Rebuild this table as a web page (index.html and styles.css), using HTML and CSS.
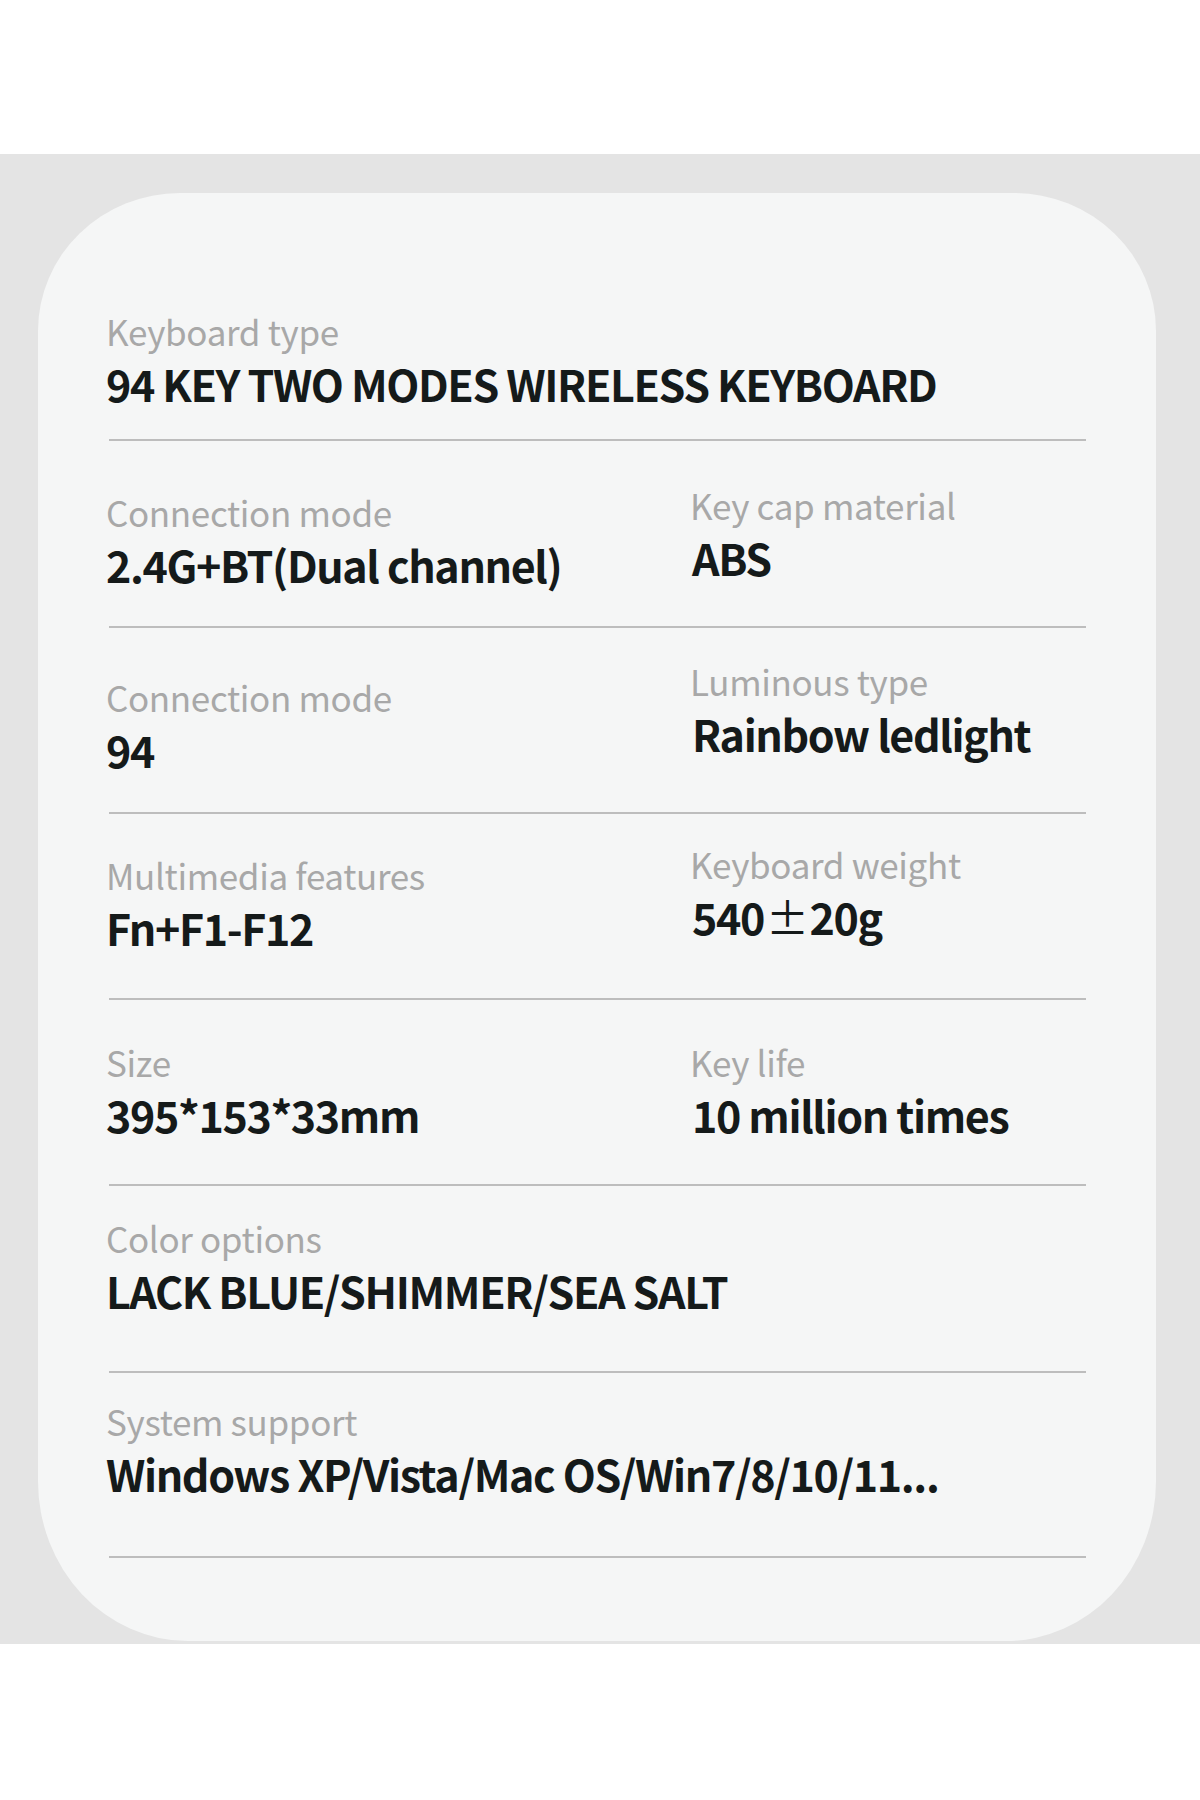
FILE: index.html
```html
<!DOCTYPE html>
<html lang="en">
<head>
<meta charset="utf-8">
<title>Keyboard specifications</title>
<link rel="stylesheet" href="styles.css">
</head>
<body>
<div class="top-space"></div>
<section class="band">
  <div class="card">
    <div class="row">
      <div class="cell">
        <div class="label">Keyboard type</div>
        <div class="value">94 KEY TWO MODES WIRELESS KEYBOARD</div>
      </div>
    </div>
    <div class="row two">
      <div class="cell">
        <div class="label">Connection mode</div>
        <div class="value">2.4G+BT(Dual channel)</div>
      </div>
      <div class="cell right">
        <div class="label">Key cap material</div>
        <div class="value">ABS</div>
      </div>
    </div>
    <div class="row two">
      <div class="cell">
        <div class="label">Connection mode</div>
        <div class="value">94</div>
      </div>
      <div class="cell right">
        <div class="label">Luminous type</div>
        <div class="value">Rainbow ledlight</div>
      </div>
    </div>
    <div class="row two">
      <div class="cell">
        <div class="label">Multimedia features</div>
        <div class="value">Fn+F1-F12</div>
      </div>
      <div class="cell right">
        <div class="label">Keyboard weight</div>
        <div class="value">540<span class="pm">±</span>20g</div>
      </div>
    </div>
    <div class="row two">
      <div class="cell">
        <div class="label">Size</div>
        <div class="value">395*153*33mm</div>
      </div>
      <div class="cell right">
        <div class="label">Key life</div>
        <div class="value">10 million times</div>
      </div>
    </div>
    <div class="row">
      <div class="cell">
        <div class="label">Color options</div>
        <div class="value">LACK BLUE/SHIMMER/SEA SALT</div>
      </div>
    </div>
    <div class="row">
      <div class="cell">
        <div class="label">System support</div>
        <div class="value">Windows XP/Vista/Mac OS/Win7/8/10/11...</div>
      </div>
    </div>
  </div>
</section>
</body>
</html>
```

FILE: styles.css
```css
* { box-sizing: border-box; }

html, body {
  margin: 0;
  padding: 0;
  background: #ffffff;
}

body {
  font-family: "Noto Sans CJK SC", "Noto Sans", "Liberation Sans", sans-serif;
  width: 1200px;
}

.top-space {
  height: 154px;
}

.band {
  background: #e4e4e4;
  height: 1490px;
  padding: 39px 44px 0 38px;
}

.card {
  background: #f5f6f6;
  height: 1448px;
  border-radius: 142px 142px 150px 150px / 138px 138px 160px 160px;
  padding: 0 70px 0 71px;
}

.row {
  border-bottom: 2px solid #bdbdbd;
  padding: 42px 0 42px 0;
}

.row.two {
  display: grid;
  grid-template-columns: 584px 1fr;
}

.row:nth-child(1) { padding-top: 118px; padding-bottom: 30px; }
.row:nth-child(2) { padding-top: 51px; padding-bottom: 36px; }
.row:nth-child(3) { padding-top: 49px; padding-bottom: 37px; }
.row:nth-child(4) { padding-top: 41px; padding-bottom: 45px; }
.row:nth-child(5) { padding-top: 42px; padding-bottom: 44px; }
.row:nth-child(6) { padding-top: 32px; padding-bottom: 55px; }
.row:nth-child(7) { padding-top: 28px; padding-bottom: 57px; }

.cell {
  margin-left: -3px;
}

.row:nth-child(2) .right { margin-top: -7px; }
.row:nth-child(3) .right { margin-top: -16px; }
.row:nth-child(4) .right { margin-top: -11px; }
.row:nth-child(5) .right { margin-top: 0; }

.right .value {
  padding-left: 2px;
}

.label {
  font-size: 35px;
  line-height: 40px;
  font-weight: 400;
  color: #a8a8a8;
  letter-spacing: -0.01em;
  white-space: nowrap;
}

.value {
  margin-top: 6px;
  font-size: 43px;
  line-height: 52px;
  font-weight: 700;
  color: #151a1a;
  letter-spacing: -0.032em;
  white-space: nowrap;
}

.pm {
  font-weight: 400;
  margin: 0 2px;
}
```
